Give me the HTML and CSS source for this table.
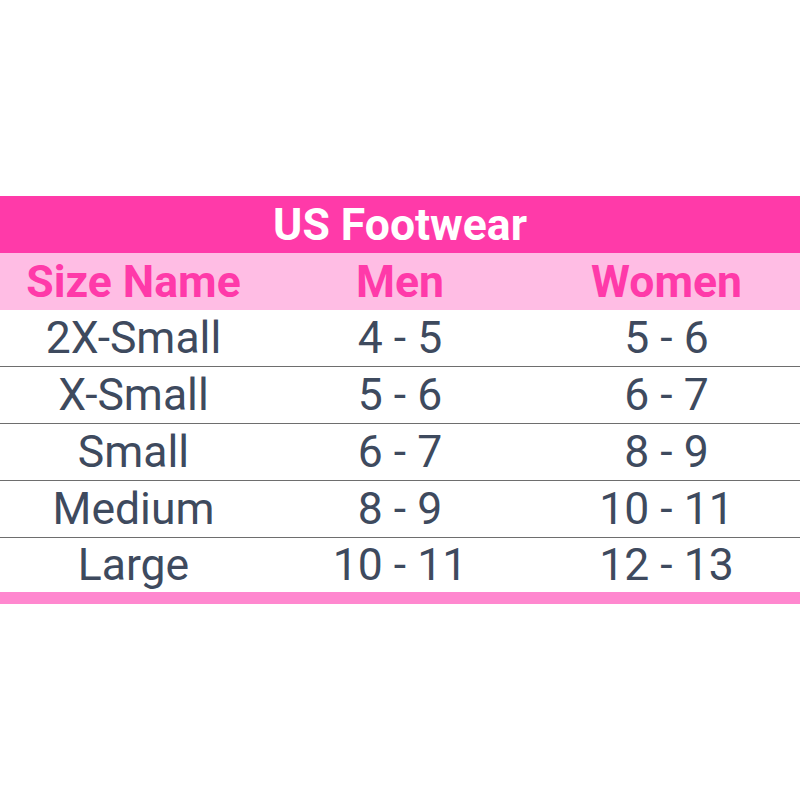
FILE: index.html
```html
<!DOCTYPE html>
<html>
<head>
<meta charset="utf-8">
<link rel="stylesheet" href="styles.css">
</head>
<body>
<div class="page">
  <div class="chart">
    <div class="title">US Footwear</div>
    <div class="row head">
      <div class="cell">Size Name</div>
      <div class="cell">Men</div>
      <div class="cell">Women</div>
    </div>
    <div class="row">
      <div class="cell">2X-Small</div>
      <div class="cell">4 - 5</div>
      <div class="cell">5 - 6</div>
    </div>
    <div class="row">
      <div class="cell">X-Small</div>
      <div class="cell">5 - 6</div>
      <div class="cell">6 - 7</div>
    </div>
    <div class="row">
      <div class="cell">Small</div>
      <div class="cell">6 - 7</div>
      <div class="cell">8 - 9</div>
    </div>
    <div class="row">
      <div class="cell">Medium</div>
      <div class="cell">8 - 9</div>
      <div class="cell">10 - 11</div>
    </div>
    <div class="row last">
      <div class="cell">Large</div>
      <div class="cell">10 - 11</div>
      <div class="cell">12 - 13</div>
    </div>
    <div class="bottom"></div>
  </div>
</div>
</body>
</html>
```

FILE: styles.css
```css
html, body {
  margin: 0;
  padding: 0;
  background: #ffffff;
}
.page {
  width: 800px;
  height: 800px;
  padding-top: 196px;
  box-sizing: border-box;
  font-family: Roboto, "Liberation Sans", sans-serif;
}
.title {
  height: 57px;
  background: #ff3aa9;
  color: #ffffff;
  font-weight: 700;
  font-size: 44.5px;
  display: flex;
  align-items: center;
  justify-content: center;
}
.row {
  display: grid;
  grid-template-columns: 267px 266px 267px;
  height: 56px;
  border-bottom: 1px solid #6e6e6e;
  color: #3e4a5e;
  font-size: 44.5px;
}
.row.head {
  height: 57px;
  background: #ffbde4;
  color: #ff3aa9;
  font-weight: 700;
  border-bottom: none;
}
.row.last {
  height: 54px;
  border-bottom: none;
}
.cell {
  display: flex;
  align-items: center;
  justify-content: center;
}
.bottom {
  height: 12px;
  background: #ff88cf;
}
```
